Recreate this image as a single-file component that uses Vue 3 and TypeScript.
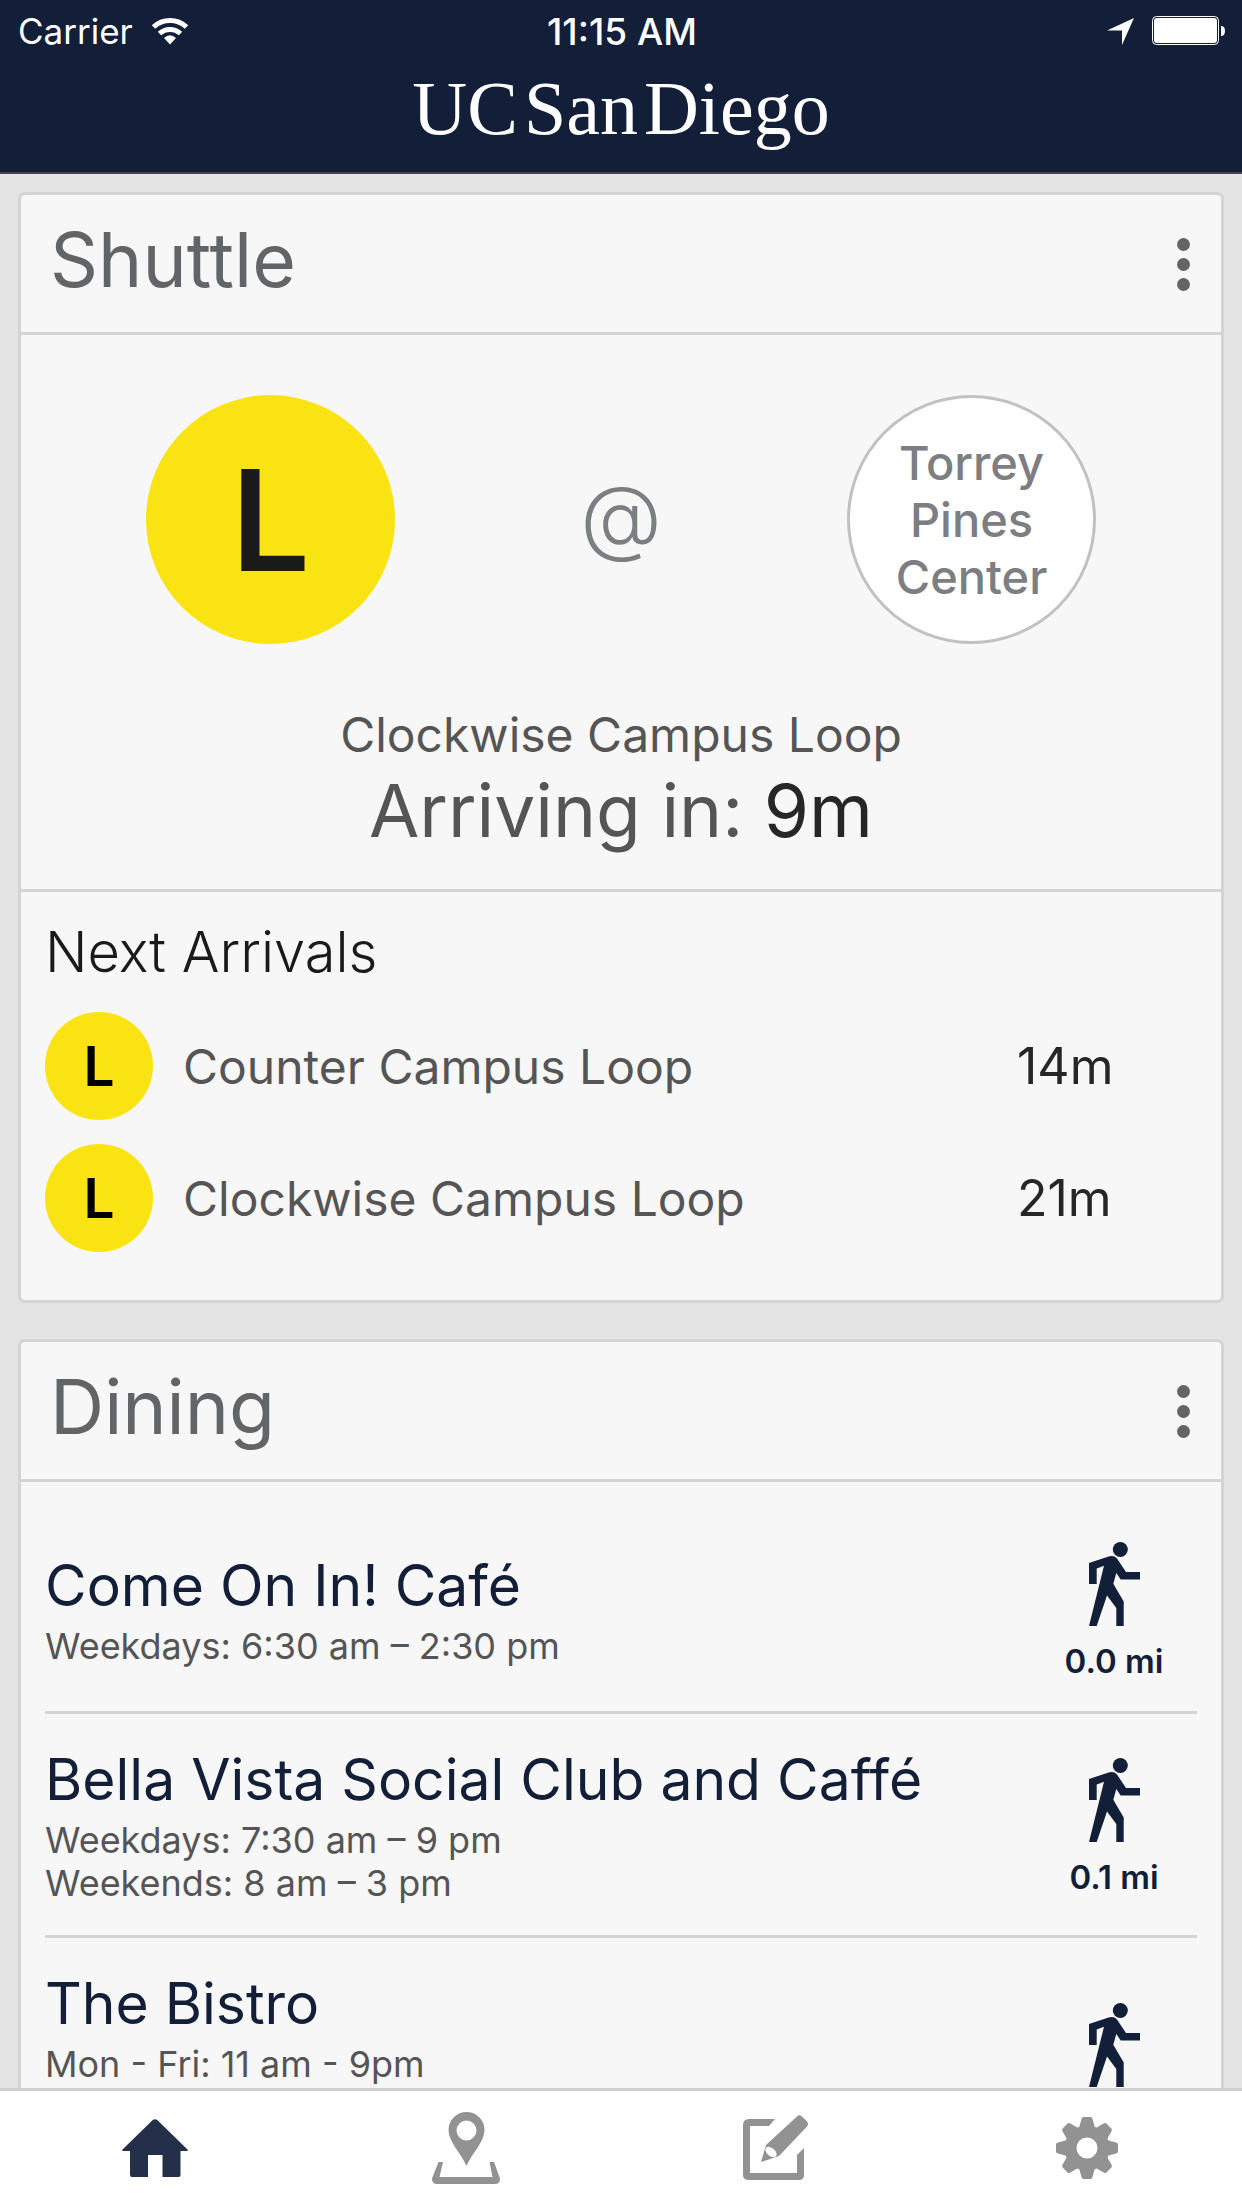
<script setup lang="ts">
interface Arrival {
  code: string
  route: string
  eta: string
}

interface Place {
  name: string
  hours: string[]
  distance: string
}

const arrivals: Arrival[] = [
  { code: 'L', route: 'Counter Campus Loop', eta: '14m' },
  { code: 'L', route: 'Clockwise Campus Loop', eta: '21m' },
]

const places: Place[] = [
  { name: 'Come On In! Café', hours: ['Weekdays: 6:30 am – 2:30 pm'], distance: '0.0 mi' },
  {
    name: 'Bella Vista Social Club and Caffé',
    hours: ['Weekdays: 7:30 am – 9 pm', 'Weekends: 8 am – 3 pm'],
    distance: '0.1 mi',
  },
  { name: 'The Bistro', hours: ['Mon - Fri: 11 am - 9pm'], distance: '' },
]
</script>

<template>
  <div class="app">
    <header class="top">
      <div class="status">
        <div class="carrier">
          <span>Carrier</span>
          <svg width="38" height="28" viewBox="0 0 38 28" aria-hidden="true">
            <g fill="none" stroke="#fff" stroke-width="5">
              <path d="M2.5 10A24 24 0 0 1 35.500 10" />
              <path d="M8.500 16.500A15.500 15.500 0 0 1 29.500 16.500" />
            </g>
            <path fill="#fff" d="M19 27.500 13 21Q19 15.500 25 21Z" />
          </svg>
        </div>
        <time class="clock">11:15 AM</time>
        <div class="indicators">
          <svg width="27" height="27" viewBox="0 0 27 27" aria-hidden="true">
            <path fill="#fff" d="M27 0 15 27V12.500H0Z" />
          </svg>
          <svg width="74" height="30" viewBox="0 0 74 30" aria-hidden="true">
            <rect x=".5" y=".5" width="66" height="28" rx="4" fill="none" stroke="#fff" />
            <rect x="2" y="2" width="63" height="25" rx="3" fill="#fff" />
            <path fill="#fff" d="M69 10Q73 10 73 15T69 20Z" />
          </svg>
        </div>
      </div>
      <h1 class="logo"><span>UC</span> <span>San</span> <span>Diego</span></h1>
    </header>

    <main class="feed">
      <section class="card">
        <div class="card-head">
          <h2>Shuttle</h2>
          <button class="more" type="button" aria-label="Shuttle options">
            <i></i><i></i><i></i>
          </button>
        </div>
        <div class="next">
          <div class="stop-row">
            <div class="route-badge">L</div>
            <div class="at">@</div>
            <div class="stop">Torrey<br />Pines<br />Center</div>
          </div>
          <p class="route-name">Clockwise Campus Loop</p>
          <p class="arriving">Arriving in: <strong>9m</strong></p>
        </div>
        <div class="arrivals">
          <h3>Next Arrivals</h3>
          <ul>
            <li v-for="a in arrivals" :key="a.route">
              <span class="mini-badge">{{ a.code }}</span>
              <span class="route">{{ a.route }}</span>
              <span class="eta">{{ a.eta }}</span>
            </li>
          </ul>
        </div>
      </section>

      <section class="card">
        <div class="card-head">
          <h2>Dining</h2>
          <button class="more" type="button" aria-label="Dining options">
            <i></i><i></i><i></i>
          </button>
        </div>
        <ul class="places">
          <li v-for="p in places" :key="p.name" class="place">
            <div class="info">
              <h3>{{ p.name }}</h3>
              <div class="hours">
                <p v-for="h in p.hours" :key="h">{{ h }}</p>
              </div>
            </div>
            <div class="walk">
              <svg width="51" height="84" viewBox="0 0 51 84" aria-hidden="true">
                <circle cx="31.300" cy="7.500" r="7.500" />
                <path
                  d="M0 21 19.500 14.500Q25 13 28 16.500L37 30H51V37.500H31.700L27.300 31 24.300 41.700 34.700 59.500V84H27.300V66L18 53.600 7.700 84H0L15 23.700 7.700 26.400V42H0Z"
                />
              </svg>
              <span>{{ p.distance }}</span>
            </div>
          </li>
        </ul>
      </section>
    </main>

    <nav class="tabs">
      <button type="button" class="active" aria-label="Home">
        <svg width="66" height="58" viewBox="0 0 66 58">
          <path
            d="M31 .8Q33 -.5 35 .8L65.500 30.500Q66.500 32 64.500 32H58.500V56Q58.500 58 56.500 58H40.500V36H26V58H10Q8 58 8 56V32H1.500Q-.5 32 .5 30.500Z"
          />
        </svg>
      </button>
      <button type="button" aria-label="Map">
        <svg width="68" height="72" viewBox="0 0 68 72">
          <path
            fill-rule="evenodd"
            d="M34.500 54C29 41 16.500 30 16.500 18A18 18 0 0 1 52.500 18C52.500 30 40 41 34.500 54ZM34.500 28.500A10 10 0 1 0 34.500 8.500A10 10 0 0 0 34.500 28.500Z"
          />
          <path d="M6.500 50H11L7.500 65H60.500L57.500 50H62L68 66.500Q68 72 63 72H5Q0 72 0 66.500Z" />
        </svg>
      </button>
      <button type="button" aria-label="Feedback">
        <svg width="66" height="66" viewBox="0 0 66 66">
          <path d="M6 4H32L26 11H7V58H54V40L61 33V60Q61 65 56 65H6Q0 65 0 60V10Q0 4 6 4Z" />
          <path d="M54 1.500Q56 -1 59 1.500L64 6.500Q66 9 64 11.500L36 41 18 47 23 30Z" />
          <ellipse cx="28" cy="37" rx="6.500" ry="4" transform="rotate(40 28 37)" fill="#fff" />
        </svg>
      </button>
      <button type="button" aria-label="Settings">
        <svg width="62" height="62" viewBox="-31 -31 62 62">
          <g v-for="n in 8" :key="n" :transform="`rotate(${n * 45})`">
            <path d="M-8 -20 -5.500 -29Q-5 -31 -3.500 -31H3.500Q5 -31 5.500 -29L8 -20Z" />
          </g>
          <circle r="16.500" fill="none" stroke="#929292" stroke-width="12" />
        </svg>
      </button>
    </nav>
  </div>
</template>

<style>
body {
  margin: 0;
  background: #e4e4e4;
}
</style>

<style scoped>
.app {
  display: flex;
  flex-direction: column;
  height: 100vh;
  font-family: Inter, "Liberation Sans", sans-serif;
  color: #555;
  background: #e4e4e4;
}

h1,
h2,
h3,
p,
ul {
  margin: 0;
  padding: 0;
  font-weight: 400;
  list-style: none;
}

button {
  padding: 0;
  border: 0;
  background: none;
}

.top {
  flex: none;
  padding-bottom: 18px;
  border-bottom: 2px solid #44444f;
  background: #131f38;
  color: #fff;
}

.status {
  display: grid;
  grid-template-columns: 1fr auto 1fr;
  align-items: center;
  height: 62px;
  padding: 0 16px 0 18px;
  font-size: 35px;
}

.carrier,
.indicators {
  display: flex;
  align-items: center;
  gap: 18px;
}

.indicators {
  justify-content: flex-end;
}

.clock {
  font-size: 37px;
  font-weight: 500;
}

.logo {
  display: flex;
  justify-content: center;
  gap: 6px;
  font: 400 76px/92px "Liberation Serif", serif;
}

.feed {
  flex: 1;
  min-height: 0;
  padding: 18px;
  overflow: hidden;
}

.card {
  margin-bottom: 36px;
  border: 3px solid #d4d4d4;
  border-radius: 7px;
  background: #f7f7f7;
}

.card-head {
  display: flex;
  align-items: center;
  justify-content: space-between;
  height: 137px;
  padding: 0 14px 0 29px;
  border-bottom: 3px solid #d4d4d4;
}

.card-head h2 {
  padding-bottom: 8px;
  font-size: 75px;
  color: #636466;
}

.more {
  display: flex;
  flex-direction: column;
  align-items: center;
  gap: 7px;
  width: 48px;
  padding-top: 2px;
}

.more i {
  width: 13px;
  height: 13px;
  border-radius: 50%;
  background: #636466;
}

.next {
  padding: 60px 30px 33px;
  border-bottom: 3px solid #d4d4d4;
  text-align: center;
}

.stop-row {
  display: flex;
  align-items: center;
  justify-content: space-between;
  margin: 0 95px 60px;
}

.route-badge,
.stop {
  display: flex;
  align-items: center;
  justify-content: center;
  box-sizing: border-box;
  width: 249px;
  height: 249px;
  border-radius: 50%;
}

.route-badge {
  background: #fae312;
  color: #1a1a1a;
  font-size: 140px;
  font-weight: 600;
}

.at {
  padding-bottom: 8px;
  font-size: 84px;
  font-weight: 300;
  color: #7d7e82;
}

.stop {
  border: 3px solid #c1c1c1;
  background: #fff;
  color: #7d7e82;
  font-size: 47px;
  font-weight: 500;
  line-height: 57px;
}

.route-name {
  font-size: 48px;
  line-height: 62px;
}

.arriving {
  font-size: 73px;
  line-height: 90px;
}

.arriving strong {
  font-weight: 400;
  color: #262626;
}

.arrivals {
  padding: 24px 24px 48px;
}

.arrivals h3 {
  padding-bottom: 24px;
  font-size: 56px;
  line-height: 72px;
  font-weight: 300;
  color: #1a1a1a;
}

.arrivals ul {
  display: flex;
  flex-direction: column;
  gap: 24px;
}

.arrivals li {
  display: flex;
  align-items: center;
  font-size: 48px;
}

.mini-badge {
  display: flex;
  align-items: center;
  justify-content: center;
  width: 108px;
  height: 108px;
  margin-right: 30px;
  border-radius: 50%;
  background: #fae312;
  color: #000;
  font-size: 55px;
  font-weight: 600;
}

.route {
  flex: 1;
}

.eta {
  width: 180px;
  font-size: 50px;
  color: #262626;
}

.places {
  padding: 25px 24px 0;
}

.place {
  display: flex;
  align-items: center;
  justify-content: space-between;
  min-height: 144px;
  padding: 30px 0;
}

.place + .place {
  border-top: 3px solid #d4d4d4;
}

.info h3 {
  padding-bottom: 3px;
  font-size: 57px;
  line-height: 72px;
  color: #131f38;
}

.hours {
  font-size: 36px;
  line-height: 43px;
}

.place:last-child .hours {
  min-height: 129px;
}

.walk {
  display: flex;
  flex-direction: column;
  align-items: center;
  gap: 18px;
  width: 166px;
  padding-top: 2px;
  color: #131f38;
  fill: currentColor;
  font-size: 33px;
  font-weight: 600;
  line-height: 34px;
}

.walk span {
  min-height: 34px;
}

.tabs {
  display: flex;
  flex: none;
  height: 117px;
  border-top: 3px solid #cfcfcf;
  background: #fff;
}

.tabs button {
  display: flex;
  flex: 1;
  align-items: center;
  justify-content: center;
  padding-bottom: 4px;
  fill: #929292;
}

.tabs .active {
  fill: #242f49;
}
</style>
